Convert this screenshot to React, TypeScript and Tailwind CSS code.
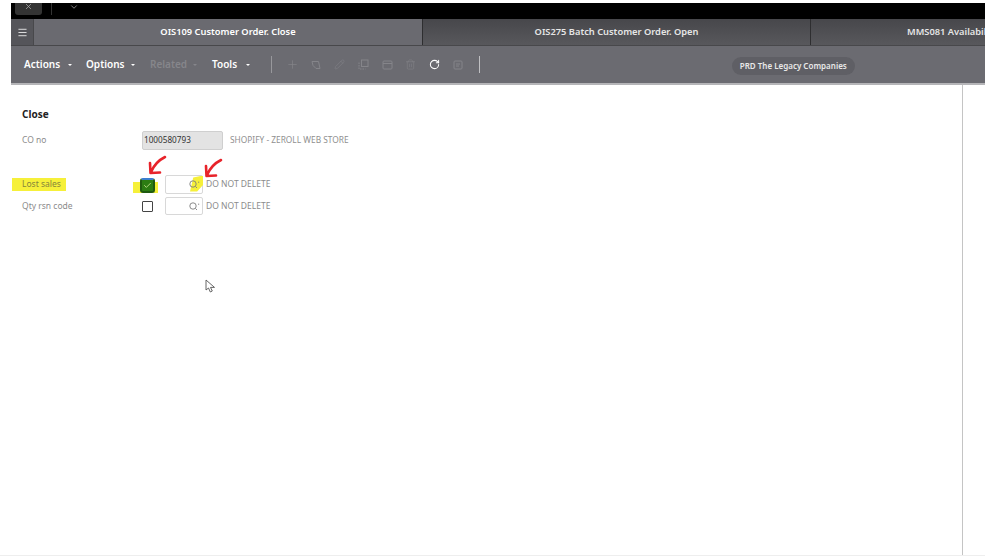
import { Check, Menu, RotateCw, Plus, Pencil, Trash2, X, ChevronDown } from 'lucide-react';

const TABS = [
    { label: 'OIS109 Customer Order. Close', width: 'w-[389px]', active: true },
    { label: 'OIS275 Batch Customer Order. Open', width: 'w-[388px]', active: false },
];

function Arrow({ className }: { className: string }) {
    return (
        <svg className={`absolute ${className}`} width="20" height="20" viewBox="0 0 20 20" fill="none">
            <path d="M18 2 C12 5 7 10 4 17 M3 8 L3.5 18 L13 17.5" stroke="#e8232a" strokeWidth="2.6" strokeLinecap="round" strokeLinejoin="round" />
        </svg>
    );
}

function Lens() {
    return (
        <svg className="relative" width="11" height="9" viewBox="0 0 11 9" fill="none" stroke="#7d7d7d" strokeWidth="0.9">
            <circle cx="4" cy="4" r="3.2" />
            <path d="M6.5 6.5 L8 8 M9 2.2 L10.2 2.2" />
        </svg>
    );
}

function Lookup({ highlight, height }: { highlight?: boolean; height: string }) {
    return (
        <div className={`relative w-[38px] ${height} bg-white border border-[#d8d8d8] rounded-[2px] flex items-center justify-end pr-[2px]`}>
            {highlight && <div className="absolute -right-[1px] top-0 w-[13px] h-[16px] bg-[#f6f03a] [clip-path:polygon(25%_12%,100%_0,100%_60%,55%_100%,0_100%)]" />}
            <Lens />
        </div>
    );
}

function ActionMenu({ label, dim, width }: { label: string; dim?: boolean; width: string }) {
    return (
        <div className={`flex items-center justify-between ${width} font-semibold text-[10px] ${dim ? 'text-[#86868b]' : 'text-white'}`}>
            <span>{label}</span>
            <span className="w-0 h-0 border-x-[2px] border-x-transparent border-t-[2.5px] border-t-current" />
        </div>
    );
}

function ToolIcon({ children }: { children: React.ReactNode }) {
    return <div className="w-[23.6px] flex justify-center">{children}</div>;
}

export default function App() {
    return (
        <div className="w-[985px] h-[556px] overflow-hidden bg-white flex flex-col text-[#8b8b8b] font-['Noto_Sans',sans-serif]">
            <div className="h-[3px] bg-white" />

            <div className="ml-[11px] flex flex-col">
                {/* window strip */}
                <div className="h-[16px] bg-black flex items-start">
                    <div className="w-[27px] h-[12px] ml-[4px] bg-[#333] rounded-b-[3px] flex justify-center">
                        <X size={9} className="text-[#aaa] -mt-[1px]" />
                    </div>
                    <div className="w-px h-[12px] bg-[#333] ml-[9px]" />
                    <ChevronDown size={10} className="text-[#999] ml-[17px] -mt-[1px]" />
                </div>

                {/* tabs */}
                <div className="h-[27px] flex bg-gradient-to-b from-[#47474b] to-[#58585c] border-b border-[#48484b] text-[9.3px] font-semibold">
                    <div className="w-[23px] bg-[#55555a] border-r border-[#48484b] flex items-center justify-center">
                        <Menu size={11} className="text-[#e8e8e8]" />
                    </div>
                    {TABS.map((tab) => (
                        <div
                            key={tab.label}
                            className={`${tab.width} flex items-center justify-center border-r border-[#2e2e30] ${tab.active ? 'bg-[#6a6a70] text-white' : 'text-[#e6e6e6]'}`}
                        >
                            {tab.label}
                        </div>
                    ))}
                    <div className="flex-1 flex items-center pl-[96px] whitespace-nowrap overflow-hidden text-[#e6e6e6]">
                        MMS081 Availability
                    </div>
                </div>

                {/* toolbar */}
                <div className="h-[39px] bg-[#6b6b71] border-b-2 border-[#b5b5b8] flex items-center pl-[13px]">
                    <ActionMenu label="Actions" width="w-[48px]" />
                    <ActionMenu label="Options" width="w-[49px] ml-[14px]" />
                    <ActionMenu label="Related" dim width="w-[47px] ml-[15px]" />
                    <ActionMenu label="Tools" width="w-[38px] ml-[15px]" />
                    <div className="w-px h-[17px] bg-[#98989c] ml-[21px]" />
                    <div className="flex items-center text-[#85858a] ml-[9px]">
                        <ToolIcon><Plus size={13} strokeWidth={1.2} /></ToolIcon>
                        <ToolIcon>
                            <svg width="10" height="10" viewBox="0 0 10 10" fill="none" stroke="currentColor">
                                <path d="M1 1.5h6.5l1.5 7h-4l-3-3z" />
                            </svg>
                        </ToolIcon>
                        <ToolIcon><Pencil size={11} strokeWidth={1.2} /></ToolIcon>
                        <ToolIcon>
                            <svg width="11" height="11" viewBox="0 0 11 11" fill="none" stroke="currentColor">
                                <rect x="3.5" y="1" width="6.5" height="6.5" />
                                <path d="M1 3.5v6.5h6.5" strokeDasharray="1.5 1" />
                            </svg>
                        </ToolIcon>
                        <ToolIcon>
                            <svg width="11" height="10" viewBox="0 0 11 10" fill="none" stroke="currentColor">
                                <rect x="1" y="1" width="9" height="8" rx="1" />
                                <path d="M1 3.5h9" />
                            </svg>
                        </ToolIcon>
                        <ToolIcon><Trash2 size={11} strokeWidth={1.2} /></ToolIcon>
                        <ToolIcon><RotateCw size={11} strokeWidth={2.2} className="text-white" /></ToolIcon>
                        <ToolIcon>
                            <svg width="10" height="10" viewBox="0 0 10 10" fill="none" stroke="currentColor">
                                <rect x="1" y="1" width="8" height="8" rx="1" />
                                <path d="M3 4h4M3 6h3" />
                            </svg>
                        </ToolIcon>
                    </div>
                    <div className="w-px h-[17px] bg-[#c0c0c3] ml-[9px]" />
                    <div className="ml-[252px] mt-[2px] w-[123px] h-[18px] rounded-full bg-[#5f5f65] flex items-center justify-center text-[8px] font-semibold text-[#e8e8e8]">
                        PRD The Legacy Companies
                    </div>
                </div>
            </div>

            {/* form area */}
            <div className="flex-1 flex min-h-0 border-b border-[#eeeeee]">
                <div className="relative w-[963px] border-r border-[#c4c4c4] pl-[22px] pt-[22px]">
                    <div className="text-[10px] font-bold text-[#222] leading-[14px]">Close</div>

                    <div className="flex items-center h-[20px] mt-[9px] text-[8.5px]">
                        <span className="w-[120px]">CO no</span>
                        <div className="w-[81px] h-[19px] bg-[#e3e3e3] border border-[#cfcfcf] rounded-[2px] flex items-center pl-[1px] text-[8.2px] text-[#333]">
                            1000580793
                        </div>
                        <span className="ml-[7px] text-[8.35px] text-[#8f8f8f]">SHOPIFY - ZEROLL WEB STORE</span>
                    </div>

                    <div className="flex items-center h-[20px] mt-[24px] text-[8.5px]">
                        <span className="relative w-[120px]">
                            <span className="absolute -left-[10px] top-0 w-[54px] h-[13px] bg-[#f6f03a]" />
                            <span className="relative text-[#85853a]">Lost sales</span>
                        </span>
                        <div className="relative w-[23px] h-[20px]">
                            <div className="absolute -left-[9px] top-[8px] w-[25px] h-[11px] bg-[#f6f03a]" />
                            <div className="relative -ml-[2px] mt-[4px] w-[15px] h-[15px] rounded-[3px] bg-[#2c7d12] border-2 border-[#3d7fd0] border-b-[#1f5a10] border-l-[#1f5a10] border-r-[#1f5a10] flex items-center justify-center">
                                <Check size={9} strokeWidth={2} className="text-[#d8f0a0]" />
                            </div>
                        </div>
                        <Lookup highlight height="h-[19px]" />
                        <span className="ml-[3px] text-[8.5px]">DO NOT DELETE</span>
                    </div>

                    <div className="flex items-center h-[20px] mt-[2px] text-[8.5px]">
                        <span className="w-[120px]">Qty rsn code</span>
                        <div className="w-[23px]">
                            <div className="w-[11px] h-[11px] bg-white border border-[#444] rounded-[1px]" />
                        </div>
                        <Lookup height="h-[18px]" />
                        <span className="ml-[3px] text-[8.5px]">DO NOT DELETE</span>
                    </div>

                    <Arrow className="left-[147px] top-[70px]" />
                    <Arrow className="left-[203px] top-[73px]" />

                    {/* mouse cursor */}
                    <svg className="absolute left-[205px] top-[194px]" width="11" height="15" viewBox="0 0 11 15" fill="white" stroke="#555" strokeWidth="0.9">
                        <path d="M1 1v10l2.5-2 1.8 4 2-1-1.8-3.6H9.5z" />
                    </svg>
                </div>
            </div>
        </div>
    );
}
